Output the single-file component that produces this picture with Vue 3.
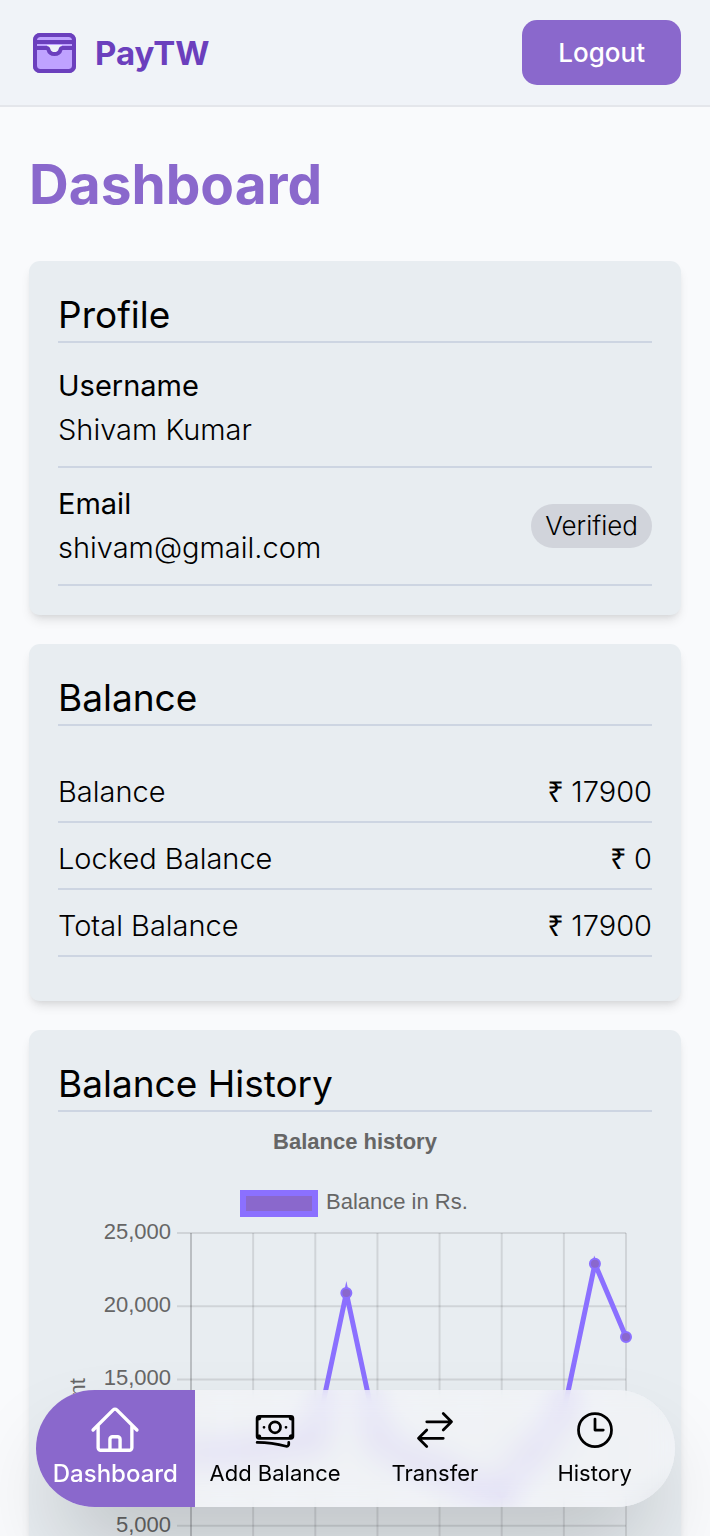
<script setup>
const fields = [
  { label: 'Username', value: 'Shivam Kumar' },
  { label: 'Email', value: 'shivam@gmail.com', badge: 'Verified' },
]

const balances = [
  { label: 'Balance', amount: 17900 },
  { label: 'Locked Balance', amount: 0 },
  { label: 'Total Balance', amount: 17900 },
]

const history = [10000, 10000, 10200, 10500, 10900, 20900, 11000, 9500, 8800, 7800, 7300, 10000, 12800, 22900, 17900]
const plot = { left: 133, right: 568, top: 121, bottom: 487, max: 25000 }
const xAt = (i) => plot.left + ((plot.right - plot.left) * i) / (history.length - 1)
const yAt = (v) => plot.bottom - ((plot.bottom - plot.top) * v) / plot.max
const ticks = [25000, 20000, 15000, 10000, 5000, 0]
const columns = history.map((_, i) => i).filter((i) => i % 2 === 0)
const line = history.map((v, i) => `${xAt(i)},${yAt(v)}`).join(' ')

const links = [
  {
    label: 'Dashboard',
    active: true,
    path: 'm2.25 12 8.954-8.955c.44-.439 1.152-.439 1.591 0L21.75 12M4.5 9.75v10.125c0 .621.504 1.125 1.125 1.125H9.75v-4.875c0-.621.504-1.125 1.125-1.125h2.25c.621 0 1.125.504 1.125 1.125V21h4.125c.621 0 1.125-.504 1.125-1.125V9.75M8.25 21h8.25',
  },
  {
    label: 'Add Balance',
    path: 'M2.25 18.75a60.07 60.07 0 0 1 15.797 2.101c.727.198 1.453-.342 1.453-1.096V18.75M3.75 4.5v.75A.75.75 0 0 1 3 6h-.75m0 0v-.375c0-.621.504-1.125 1.125-1.125H20.25M2.25 6v9m18-10.5v.75c0 .414.336.75.75.75h.75m-1.5-1.5h.375c.621 0 1.125.504 1.125 1.125v9.75c0 .621-.504 1.125-1.125 1.125h-.375m1.5-1.5H21a.75.75 0 0 0-.75.75v.75m0 0H3.75m0 0h-.375a1.125 1.125 0 0 1-1.125-1.125V15m1.5 1.5v-.75A.75.75 0 0 0 3 15h-.75M15 10.5a3 3 0 1 1-6 0 3 3 0 0 1 6 0Zm3 0h.008v.008H18V10.5Zm-12 0h.008v.008H6V10.5Z',
  },
  {
    label: 'Transfer',
    path: 'M7.5 21 3 16.5m0 0L7.5 12M3 16.5h13.5m0-13.5L21 7.5m0 0L16.5 12M21 7.5H7.5',
  },
  {
    label: 'History',
    path: 'M12 6v6h4.5m4.5 0a9 9 0 1 1-18 0 9 9 0 0 1 18 0Z',
  },
]
</script>

<template>
  <div class="app">
    <header class="topbar">
      <a class="brand" href="#">
        <svg class="logo" viewBox="0 0 44 40" aria-hidden="true">
          <rect x="2" y="2" width="39" height="36" rx="5" fill="#bfa2ff" />
          <path d="M14 12H29L27 18 21.500 21 16 18Z" fill="#f0f3f8" stroke="none" />
          <path d="M3 9H40M3 15H13.500c1.300 0 1.700.6 2 1.700.7 2.700 3 4.300 6 4.300s5.300-1.600 6-4.300c.3-1.100.7-1.700 2-1.700H40" fill="none" />
          <rect x="2" y="2" width="39" height="36" rx="5" fill="none" />
        </svg>
        <span>PayTW</span>
      </a>
      <button class="logout" type="button">Logout</button>
    </header>

    <main class="content">
      <h1>Dashboard</h1>

      <section class="card">
        <h2>Profile</h2>
        <dl class="fields">
          <div v-for="field in fields" :key="field.label" class="field">
            <div>
              <dt>{{ field.label }}</dt>
              <dd>{{ field.value }}</dd>
            </div>
            <span v-if="field.badge" class="badge">{{ field.badge }}</span>
          </div>
        </dl>
      </section>

      <section class="card">
        <h2>Balance</h2>
        <dl class="balances">
          <div v-for="row in balances" :key="row.label" class="row">
            <dt>{{ row.label }}</dt>
            <dd><span class="currency">₹ </span>{{ row.amount }}</dd>
          </div>
        </dl>
      </section>

      <section class="card">
        <h2>Balance History</h2>
        <svg class="chart" viewBox="0 0 594 594" role="img" aria-label="Balance history">
          <text class="title" x="297" y="37" text-anchor="middle">Balance history</text>
          <rect class="key" x="185" y="81" width="72" height="21" />
          <text x="268" y="97">Balance in Rs.</text>
          <g class="grid">
            <line v-for="t in ticks" :key="t" :x1="plot.left - 14" :x2="plot.right" :y1="yAt(t)" :y2="yAt(t)" />
            <line v-for="c in columns" :key="c" :x1="xAt(c)" :x2="xAt(c)" :y1="plot.top" :y2="plot.bottom + 14" />
            <line :x1="plot.left" :x2="plot.left" :y1="plot.top" :y2="plot.bottom" />
          </g>
          <text v-for="t in ticks" :key="t" :x="plot.left - 20" :y="yAt(t) + 6" text-anchor="end">{{ t.toLocaleString('en-US') }}</text>
          <text transform="translate(27 304) rotate(-90)" text-anchor="middle">Amount</text>
          <polyline class="series" :points="line" />
          <circle v-for="(v, i) in history" :key="i" class="point" :cx="xAt(i)" :cy="yAt(v)" r="5" />
        </svg>
      </section>
    </main>

    <nav class="tabs">
      <a v-for="link in links" :key="link.label" href="#" class="tab" :class="{ active: link.active }">
        <svg viewBox="0 0 24 24" aria-hidden="true"><path :d="link.path" /></svg>
        <span>{{ link.label }}</span>
      </a>
    </nav>
  </div>
</template>

<style>
body {
  margin: 0;
  background: #f9fafc;
}
</style>

<style scoped>
.app {
  height: 100vh;
  display: flex;
  flex-direction: column;
  overflow: hidden;
  background: #f9fafc;
  color: #000;
  font-family: Inter, "Noto Sans", sans-serif;
}
.topbar {
  flex: none;
  display: flex;
  align-items: center;
  justify-content: space-between;
  padding: 20px 29px;
  background: #f0f3f8;
  border-bottom: 2px solid #e4e6eb;
}
.brand {
  display: flex;
  align-items: center;
  gap: 18px;
  padding-left: 4px;
  color: #6b3fbd;
  font-size: 33px;
  font-weight: 700;
  line-height: 40px;
  text-decoration: none;
}
.logo {
  width: 44px;
  height: 40px;
  stroke: #6b3fbd;
  stroke-width: 4;
}
.logout {
  padding: 14px 36px;
  border: 0;
  border-radius: 15px;
  background: #8a68cc;
  color: #fff;
  font: 500 26px/37px Inter, sans-serif;
}
.content {
  flex: 1;
  min-height: 0;
  overflow-y: auto;
  scrollbar-width: none;
  display: flex;
  flex-direction: column;
  gap: 29px;
  padding: 44px 29px 160px;
}
h1 {
  margin: 0 0 15px;
  color: #8a68cc;
  font-size: 55px;
  font-weight: 700;
  line-height: 66px;
}
.card {
  flex: none;
  padding: 29px;
  border-radius: 11px;
  background: #e8edf1;
  box-shadow: 0 7px 11px -2px rgba(0, 0, 0, 0.1), 0 4px 7px -4px rgba(0, 0, 0, 0.1);
}
h2 {
  margin: 0;
  padding-bottom: 1px;
  border-bottom: 2px solid #cdd5e2;
  font-size: 37px;
  font-weight: 400;
  line-height: 50px;
}
dl,
dd {
  margin: 0;
}
.fields {
  padding-top: 7px;
}
.field {
  display: flex;
  align-items: center;
  justify-content: space-between;
  padding: 14px 0;
  border-bottom: 2px solid #cdd5e2;
  font-size: 29px;
  line-height: 44px;
}
.field dd,
.row {
  font-weight: 300;
}
.badge {
  padding: 4px 14px;
  border-radius: 22px;
  background: #d1d4db;
  font-size: 26px;
  font-weight: 300;
  line-height: 36px;
}
.balances {
  padding: 30px 0 15px;
}
.row {
  display: flex;
  justify-content: space-between;
  padding: 14px 0 7px;
  border-bottom: 2px solid #cdd5e2;
  font-size: 29px;
  line-height: 44px;
}
.currency {
  font-family: "Noto Sans", sans-serif;
  font-weight: 400;
  line-height: 1;
}
.chart {
  display: block;
  width: 100%;
  font-family: "Liberation Sans", Arial, sans-serif;
  font-size: 22px;
  fill: #666;
}
.title {
  font-weight: 700;
}
.key {
  fill: #8a68cc;
  stroke: #8b70ff;
  stroke-width: 6;
}
.grid {
  stroke: rgba(0, 0, 0, 0.1);
  stroke-width: 2;
}
.series {
  fill: none;
  stroke: #8b70ff;
  stroke-width: 5;
  stroke-miterlimit: 10;
}
.point {
  fill: #8a68cc;
  stroke: #8b70ff;
  stroke-width: 2;
}
.tabs {
  position: fixed;
  left: 5%;
  right: 5%;
  bottom: 29px;
  display: grid;
  grid-template-columns: repeat(4, 1fr);
  height: 117px;
  border-radius: 59px;
  box-shadow: 0 46px 92px -22px rgba(0, 0, 0, 0.25);
}
.tabs::before,
.tabs::after {
  content: "";
  position: absolute;
  inset: 0;
  z-index: -1;
  border-radius: inherit;
  background: rgba(248, 250, 252, 0.3);
  backdrop-filter: blur(11px);
}
.tab {
  display: flex;
  flex-direction: column;
  align-items: center;
  justify-content: center;
  gap: 6px;
  padding-bottom: 2px;
  color: #000;
  font-size: 22px;
  line-height: 30px;
  text-decoration: none;
  white-space: nowrap;
}
.tab svg {
  width: 44px;
  height: 44px;
  fill: none;
  stroke: currentColor;
  stroke-width: 1.5;
  stroke-linecap: round;
  stroke-linejoin: round;
}
.tab.active {
  gap: 2px;
  padding-bottom: 6px;
  border-radius: 59px 0 0 59px;
  background: #8a68cc;
  color: #fff;
  font-size: 24px;
  font-weight: 500;
}
.tab.active svg {
  width: 54px;
  height: 54px;
}
</style>
